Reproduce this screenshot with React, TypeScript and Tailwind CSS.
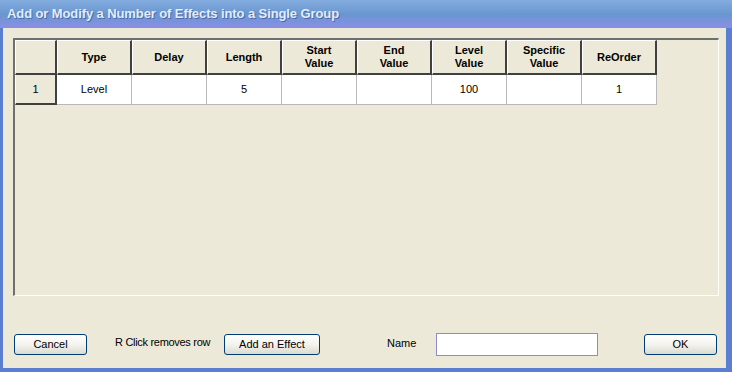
import type { FC } from 'react';

const columns = [
  ['Type'],
  ['Delay'],
  ['Length'],
  ['Start', 'Value'],
  ['End', 'Value'],
  ['Level', 'Value'],
  ['Specific', 'Value'],
  ['ReOrder'],
];

const row = ['Level', '', '5', '', '', '100', '', '1'];

const XpButton: FC<{ label: string; className?: string }> = ({ label, className }) => (
  <button
    className={`h-[21px] shrink-0 rounded-[3px] border border-[#003c74] bg-gradient-to-b from-[#ffffff] via-[#f4f3ee] to-[#dcdad0] text-[11px] text-black ${className ?? ''}`}
  >
    {label}
  </button>
);

export default function App() {
  return (
    <div
      className="flex h-[372px] w-[732px] flex-col overflow-hidden bg-[#5a7fd0]"
      style={{ fontFamily: '"Liberation Sans", Arial, sans-serif' }}
    >
      <div className="flex h-[28px] items-center bg-gradient-to-b from-[#84acdf] via-[#6897cf] to-[#8a8ee6] pl-[7px]">
        <span className="text-[13px] font-bold tracking-[-0.1px] text-[#e4ecf8] [text-shadow:1px_1px_0_#4a6aa8]">
          Add or Modify a Number of Effects into a Single Group
        </span>
      </div>
      <div className="mb-[4px] ml-[3px] mr-[6px] flex flex-1 flex-col bg-[#ece9d8]">
        <div className="ml-[10px] mt-[10px] h-[258px] w-[706px] border-b border-l-2 border-r border-t-2 border-b-white border-l-[#6f6f6f] border-r-white border-t-[#6f6f6f] bg-[#ece9d8]">
          <div className="flex">
            <div className="h-[35px] w-[42px] border-b-2 border-r-2 border-b-[#404040] border-r-[#404040] border-l border-t border-l-white border-t-white" />
            {columns.map((c, i) => (
              <div
                key={i}
                className="flex h-[35px] w-[75px] flex-col items-center justify-center border-b-2 border-r-2 border-l border-t border-b-[#404040] border-r-[#404040] border-l-white border-t-white text-[11px] font-bold leading-[13px] text-black"
              >
                {c.map((l) => (
                  <span key={l}>{l}</span>
                ))}
              </div>
            ))}
          </div>
          <div className="flex">
            <div className="flex h-[30px] w-[42px] items-center justify-center border-b-2 border-r-2 border-l border-b-[#404040] border-r-[#404040] border-l-white text-[11px] text-black">
              1
            </div>
            {row.map((v, i) => (
              <div
                key={i}
                className="flex h-[30px] w-[75px] items-center justify-center border-b border-r border-b-[#b8b8b8] border-r-[#b8b8b8] bg-white text-[11px] text-black"
              >
                {v}
              </div>
            ))}
          </div>
        </div>
        <div className="mt-[37px] flex items-center">
          <XpButton label="Cancel" className="ml-[11px] w-[73px]" />
          <span className="ml-[28px] -mt-[4px] w-[96px] whitespace-nowrap text-[11px] tracking-[-0.3px] text-black">
            R Click removes row
          </span>
          <XpButton label="Add an Effect" className="ml-[13px] w-[96px]" />
          <span className="ml-[67px] -mt-[2px] w-[49px] text-[11px] text-black">Name</span>
          <input className="h-[23px] w-[162px] shrink-0 border border-[#8c8cc8] bg-white outline-none" />
          <XpButton label="OK" className="ml-[46px] w-[73px]" />
        </div>
      </div>
    </div>
  );
}
